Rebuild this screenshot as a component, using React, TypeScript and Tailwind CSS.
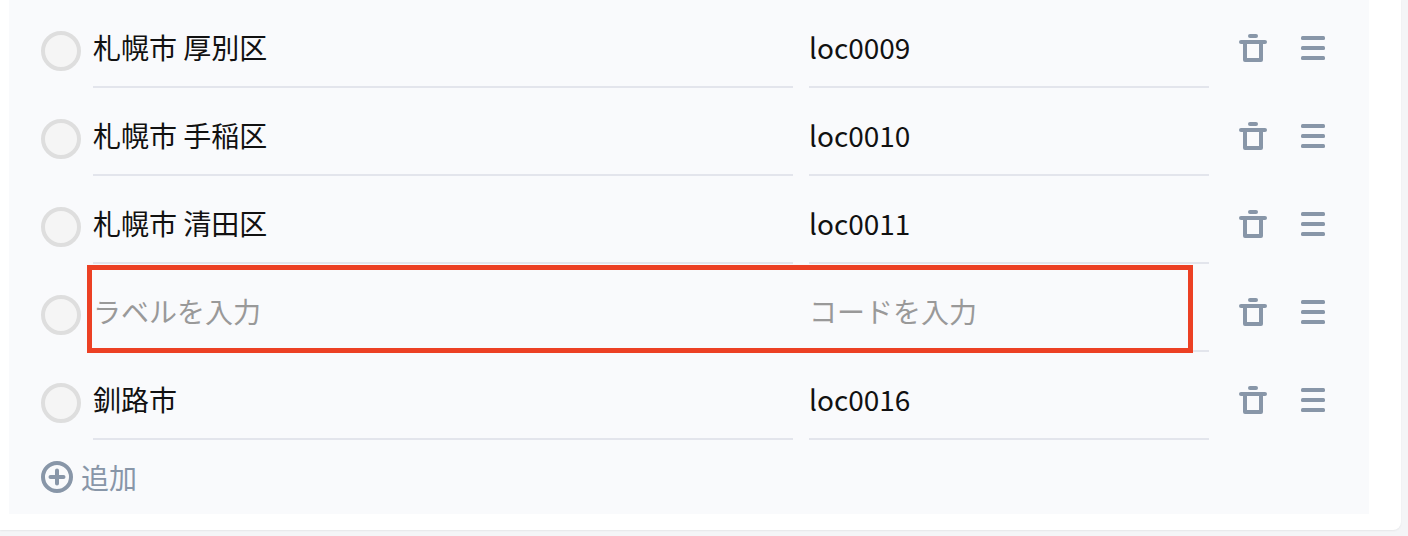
const rows = [
  { label: "札幌市 厚別区", code: "loc0009" },
  { label: "札幌市 手稲区", code: "loc0010" },
  { label: "札幌市 清田区", code: "loc0011" },
  { label: "", code: "" },
  { label: "釧路市", code: "loc0016" },
];

const font = "font-['Noto_Sans_CJK_JP','Noto_Sans',sans-serif]";

function Trash() {
  return (
    <svg width="28" height="28" viewBox="0 0 28 28" fill="#8896a8">
      <rect x="9" y="0" width="10" height="4" rx="2" />
      <rect x="0" y="6" width="28" height="4" rx="2" />
      <path d="M4 9h4v15h12V9h4v17a2 2 0 0 1-2 2H6a2 2 0 0 1-2-2z" />
    </svg>
  );
}

function Menu() {
  return (
    <svg width="24" height="24" viewBox="0 0 24 24" fill="#8896a8">
      <rect x="0" y="0" width="24" height="4" rx="1.5" />
      <rect x="0" y="10" width="24" height="4" rx="1.5" />
      <rect x="0" y="20" width="24" height="4" rx="1.5" />
    </svg>
  );
}

function PlusCircle() {
  return (
    <svg width="32" height="32" viewBox="0 0 32 32" fill="none" stroke="#8896a8">
      <circle cx="16" cy="16" r="14" strokeWidth="4" />
      <path d="M16 9.5v13M9.5 16h13" strokeWidth="4" strokeLinecap="round" />
    </svg>
  );
}

function Row({ label, code }: { label: string; code: string }) {
  return (
    <div className="flex h-[88px] items-start">
      <div className="mt-[31px] ml-[32px] h-10 w-10 shrink-0 rounded-full border-4 border-[#dedede] bg-[#f5f5f5]" />
      <div className="ml-3 flex h-[88px] w-[700px] shrink-0 items-center border-b-2 border-[#e3e5ec]">
        <input
          readOnly
          value={label}
          placeholder="ラベルを入力"
          className="h-full w-full bg-transparent pt-2 text-[28px] text-[#111] outline-none placeholder:text-[#999]"
        />
      </div>
      <div className="ml-4 flex h-[88px] w-[400px] shrink-0 items-center border-b-2 border-[#e3e5ec]">
        <input
          readOnly
          value={code}
          placeholder="コードを入力"
          className="h-full w-full bg-transparent pt-2 text-[28px] text-[#111] outline-none placeholder:text-[#999]"
        />
      </div>
      <div className="ml-[30px] mt-[34px]">
        <Trash />
      </div>
      <div className="ml-[34px] mt-[36px]">
        <Menu />
      </div>
    </div>
  );
}

export default function App() {
  return (
    <div className={`h-[536px] w-[1408px] overflow-hidden bg-[#f4f5f7] ${font}`}>
      <div className="h-[530px] w-[1401px] rounded-br-lg bg-white pl-[9px] pr-[32px] shadow-[0_1px_2px_rgba(0,0,0,0.06)]">
        <div className="relative h-[514px] w-[1360px] bg-[#f9fafc]">
          {rows.map((r) => (
            <Row key={r.code || "new"} label={r.label} code={r.code} />
          ))}
          <div className="flex items-center pl-[32px] pt-[21px]">
            <PlusCircle />
            <span className="ml-2 text-[28px] leading-[32px] text-[#8896a8]">追加</span>
          </div>
          <div className="absolute left-[78px] top-[265px] h-[88px] w-[1106px] border-[5px] border-[#ec4024]" />
        </div>
      </div>
    </div>
  );
}
